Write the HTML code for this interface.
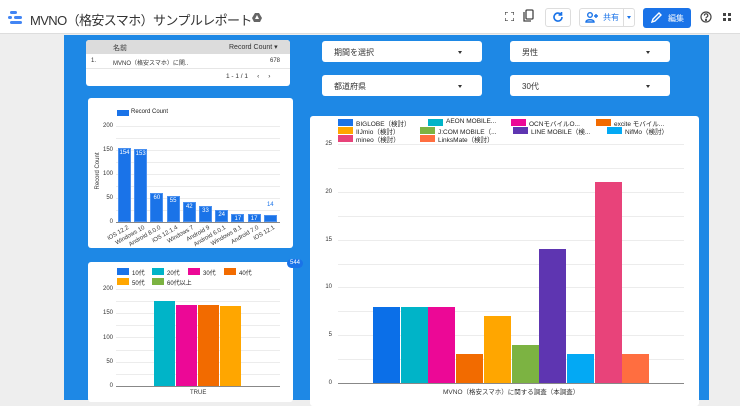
<!DOCTYPE html>
<html><head><meta charset="utf-8"><style>
*{margin:0;padding:0;box-sizing:border-box}
body{width:740px;height:400px;overflow:hidden;background:#eeeeee;font-family:"Liberation Sans","Noto Sans CJK JP",sans-serif;position:relative;color:#333}
.a{position:absolute}
.card{position:absolute;background:#fff;border-radius:3px}
.t{position:absolute;white-space:nowrap}
.dd{position:absolute;background:#fff;border-radius:3px;height:21px;font-size:8px;color:#333;padding:6px 0 0 12px}
.dd:after{content:"";position:absolute;right:20px;top:10px;border:2px solid transparent;border-top:3px solid #333}
.g{position:absolute;height:1px;background:#ececec}
.yl{position:absolute;font-size:6px;color:#333;text-align:right;width:20px}
.b{position:absolute}
.lg{position:absolute;width:12px;height:7px}
.lt{position:absolute;font-size:6.5px;white-space:nowrap;color:#222}
</style></head><body>
<div class="a" style="left:0;top:0;width:740px;height:34px;background:#fff;border-bottom:1px solid #ddd"></div>
<!-- logo -->
<div class="a" style="left:10px;top:11px;width:7px;height:3px;background:#4285f4;border-radius:2px"></div>
<div class="a" style="left:8px;top:16px;width:4px;height:3px;background:#4285f4;border-radius:2px"></div>
<div class="a" style="left:14px;top:16px;width:8px;height:3px;background:#4285f4;border-radius:2px"></div>
<div class="a" style="left:10px;top:21px;width:12px;height:3px;background:#4285f4;border-radius:2px"></div>
<div class="t" style="left:30px;top:10px;font-size:13px;letter-spacing:-0.6px;color:#333">MVNO（格安スマホ）サンプルレポート</div>
<svg class="a" style="left:252px;top:13px" width="10" height="9" viewBox="0 0 10 9"><path d="M3 0h4l3 5-2 4H2L0 5z" fill="#666"/><path d="M5 2L3 6h4z" fill="#fff"/></svg>
<!-- toolbar -->
<svg class="a" style="left:505px;top:12px" width="9" height="9" viewBox="0 0 9 9" fill="none" stroke="#444" stroke-width="1.3"><path d="M0 3V0h3M6 0h3v3M9 6v3H6M3 9H0V6"/></svg>
<svg class="a" style="left:523px;top:9px" width="11" height="14" viewBox="0 0 11 14" fill="none" stroke="#444" stroke-width="1.3"><rect x="3" y="1" width="7" height="9" rx="1"/><path d="M1 3v9h7"/></svg>
<div class="a" style="left:545px;top:8px;width:26px;height:19px;border:1px solid #ddd;border-radius:3px"></div>
<svg class="a" style="left:552px;top:11px" width="12" height="12" viewBox="0 0 12 12" fill="none" stroke="#1a73e8" stroke-width="1.6"><path d="M10 6a4 4 0 1 1-1.2-2.8"/><path d="M9.5 1v3h-3" fill="#1a73e8"/></svg>
<div class="a" style="left:579px;top:8px;width:56px;height:19px;border:1px solid #ddd;border-radius:3px"></div>
<div class="a" style="left:623px;top:8px;width:1px;height:19px;background:#ddd"></div>
<svg class="a" style="left:585px;top:12px" width="14" height="11" viewBox="0 0 14 11" fill="none" stroke="#1a73e8" stroke-width="1.4"><circle cx="5" cy="3" r="2.3"/><path d="M1 10c0-3 8-3 8 0z"/><path d="M11 2v4M9 4h4"/></svg>
<div class="t" style="left:603px;top:12px;font-size:8px;color:#1a73e8">共有</div>
<div class="a" style="left:627px;top:16px;border:2.5px solid transparent;border-top:3px solid #1a73e8"></div>
<div class="a" style="left:643px;top:8px;width:48px;height:20px;background:#1a73e8;border-radius:3px"></div>
<svg class="a" style="left:651px;top:12px" width="11" height="11" viewBox="0 0 11 11" fill="none" stroke="#fff" stroke-width="1.4"><path d="M1 10l1-3 6-6 2 2-6 6z"/></svg>
<div class="t" style="left:668px;top:13px;font-size:8px;color:#fff">編集</div>
<svg class="a" style="left:700px;top:11px" width="12" height="12" viewBox="0 0 12 12" fill="none" stroke="#444" stroke-width="1.2"><circle cx="6" cy="6" r="5"/><path d="M4.4 4.6a1.7 1.7 0 1 1 2.3 1.5c-.6.3-.7.6-.7 1.3"/><circle cx="6" cy="9" r=".5" fill="#444"/></svg>
<div class="a" style="left:723px;top:13px;width:3px;height:3px;background:#444"></div>
<div class="a" style="left:728px;top:13px;width:3px;height:3px;background:#444"></div>
<div class="a" style="left:723px;top:18px;width:3px;height:3px;background:#444"></div>
<div class="a" style="left:728px;top:18px;width:3px;height:3px;background:#444"></div>
<!-- canvas -->
<div class="a" style="left:64px;top:35px;width:645px;height:365px;background:#1e88e5"></div>
<!-- table -->
<div class="card" style="left:86px;top:40px;width:204px;height:46px;overflow:hidden">
<div class="a" style="left:0;top:0;width:204px;height:14px;background:#dcdcdc"></div>
<div class="t" style="left:27px;top:3px;font-size:7px">名前</div>
<div class="t" style="left:143px;top:3px;font-size:7px">Record Count ▾</div>
<div class="t" style="left:5px;top:18px;font-size:6px">1.</div>
<div class="t" style="left:27px;top:18px;font-size:6px">MVNO（格安スマホ）に関..</div>
<div class="t" style="left:184px;top:18px;font-size:6px">678</div>
<div class="a" style="left:0;top:28px;width:204px;height:1px;background:#e6e6e6"></div>
<div class="t" style="left:140px;top:33px;font-size:6.5px">1 - 1 / 1 &nbsp;&nbsp;&nbsp; ‹ &nbsp;&nbsp;&nbsp; ›</div>
</div>
<!-- dropdowns -->
<div class="dd" style="left:322px;top:41px;width:160px">期間を選択</div>
<div class="dd" style="left:510px;top:41px;width:160px">男性</div>
<div class="dd" style="left:322px;top:75px;width:160px">都道府県</div>
<div class="dd" style="left:510px;top:75px;width:160px">30代</div>
<!-- chart 1 -->
<div class="card" style="left:88px;top:98px;width:205px;height:150px"></div>
<div class="lg" style="left:117px;top:110px;background:#1a73e8;width:12px;height:6px"></div>
<div class="lt" style="left:131px;top:109px;font-size:6px">Record Count</div>
<div class="yl" style="left:93px;top:123px">200</div>
<div class="yl" style="left:93px;top:147px">150</div>
<div class="yl" style="left:93px;top:171px">100</div>
<div class="yl" style="left:93px;top:195px">50</div>
<div class="yl" style="left:93px;top:219px">0</div>
<div class="g" style="left:116px;top:126px;width:164px"></div>
<div class="g" style="left:116px;top:138px;width:164px"></div>
<div class="g" style="left:116px;top:150px;width:164px"></div>
<div class="g" style="left:116px;top:162px;width:164px"></div>
<div class="g" style="left:116px;top:174px;width:164px"></div>
<div class="g" style="left:116px;top:186px;width:164px"></div>
<div class="g" style="left:116px;top:198px;width:164px"></div>
<div class="g" style="left:116px;top:210px;width:164px"></div>
<div class="t" style="left:78px;top:168px;width:40px;text-align:center;font-size:6px;transform:rotate(-90deg)">Record Count</div>
<div class="a" style="left:116px;top:222px;width:164px;height:1px;background:#888"></div>
<!-- chart 3 -->
<div class="card" style="left:88px;top:262px;width:205px;height:140px"></div>
<div class="a" style="left:287px;top:259px;width:16px;height:9px;background:#1a73e8;border-radius:5px;color:#fff;font-size:6px;text-align:center;line-height:9px">544</div>
<!-- chart right -->
<div class="card" style="left:310px;top:116px;width:389px;height:290px"></div>
<script>
function add(h){document.body.insertAdjacentHTML('beforeend',h)}
var v1=[154,153,60,55,42,33,24,17,17,14],l1=['iOS 12.2','Windows 10','Android 8.0.0','iOS 12.1.4','Windows 7','Android 9','Android 6.0.1','Windows 8.1','Android 7.0','iOS 12.1'];
for(var i=0;i<10;i++){var h=v1[i]*0.48,x=118+i*16.2;
add('<div class="b" style="left:'+x+'px;top:'+(222-h)+'px;width:13px;height:'+h+'px;background:#1a73e8;border:1px solid #4a90f0"></div>');
if(i<9)add('<div class="t" style="left:'+x+'px;top:'+(222-h+2)+'px;width:13px;text-align:center;font-size:6px;color:#fff">'+v1[i]+'</div>');
else add('<div class="t" style="left:'+x+'px;top:'+(222-h-13)+'px;width:13px;text-align:center;font-size:6px;color:#1a73e8">14</div>');
add('<div class="t" style="left:'+(x+9-50)+'px;top:225px;width:50px;text-align:right;font-size:6px;transform:rotate(-30deg);transform-origin:right top;color:#333">'+l1[i]+'</div>');}
var lg3=[['10代','#1a73e8',117,268],['20代','#00b4c8',152,268],['30代','#ec0896',188,268],['40代','#f26b00',224,268],['50代','#ffa600',117,278],['60代以上','#7cb342',152,278]];
lg3.forEach(function(a){add('<div class="lg" style="left:'+a[2]+'px;top:'+a[3]+'px;background:'+a[1]+'"></div><div class="lt" style="left:'+(a[2]+15)+'px;top:'+(a[3])+'px;font-size:6px">'+a[0]+'</div>')});
[200,150,100,50,0].forEach(function(v,i){add('<div class="yl" style="left:93px;top:'+(286+i*24.25)+'px">'+v+'</div>')});
for(var k=0;k<8;k++)add('<div class="g" style="left:116px;top:'+(289+k*12.1)+'px;width:164px"></div>');
var v3=[175,167,167,165],c3=['#00b4c8','#ec0896','#f26b00','#ffa600'];
for(var i=0;i<4;i++){var h=v3[i]*0.485;add('<div class="b" style="left:'+(154+i*22)+'px;top:'+(386-h)+'px;width:21px;height:'+h+'px;background:'+c3[i]+'"></div>')}
add('<div class="a" style="left:116px;top:386px;width:164px;height:1px;background:#888"></div>');
add('<div class="t" style="left:190px;top:390px;font-size:6px">TRUE</div>');
var lg2=[['BIGLOBE（検討）','#1a73e8',338,119],['AEON MOBILE...','#00b4c8',428,119],['OCNモバイルO...','#ec0896',511,119],['excite モバイル...','#f26b00',596,119],['IIJmio（検討）','#ffa600',338,127],['J:COM MOBILE（...','#7cb342',420,127],['LINE MOBILE（検...','#5e35b1',513,127],['NifMo（検討）','#03a9f4',607,127],['mineo（検討）','#e8437a',338,135],['LinksMate（検討）','#ff6e40',420,135]];
lg2.forEach(function(a){add('<div class="lg" style="left:'+a[2]+'px;top:'+a[3]+'px;width:15px;background:'+a[1]+'"></div><div class="lt" style="left:'+(a[2]+18)+'px;top:'+(a[3]-1)+'px">'+a[0]+'</div>')});
[25,20,15,10,5,0].forEach(function(v,i){add('<div class="yl" style="left:312px;top:'+(141+i*47.75)+'px">'+v+'</div>')});
for(var k=0;k<10;k++)add('<div class="g" style="left:338px;top:'+(144+k*23.9)+'px;width:346px"></div>');
var v2=[8,8,8,3,7,4,14,3,21,3],c2=['#0b6fe8','#00b4c8','#ec0896','#f26b00','#ffa600','#7cb342','#5e35b1','#03a9f4','#e8437a','#ff6e40'];
for(var i=0;i<10;i++){var h=v2[i]*9.55;add('<div class="b" style="left:'+(373+i*27.7)+'px;top:'+(383-h)+'px;width:27px;height:'+h+'px;background:'+c2[i]+'"></div>')}
add('<div class="a" style="left:338px;top:383px;width:346px;height:1px;background:#888"></div>');
add('<div class="t" style="left:443px;top:386px;font-size:6.5px">MVNO（格安スマホ）に関する調査（本調査）</div>');
</script>
</body></html>
